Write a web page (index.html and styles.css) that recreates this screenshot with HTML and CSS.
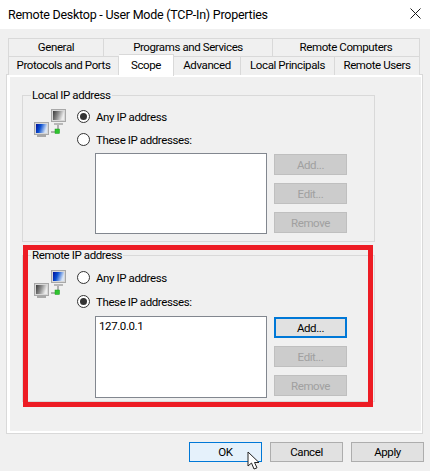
FILE: index.html
```html
<!DOCTYPE html>
<html lang="en">
<head>
<meta charset="utf-8">
<title>Remote Desktop - User Mode (TCP-In) Properties</title>
<link rel="stylesheet" href="styles.css">
</head>
<body>
<svg class="defs" width="0" height="0" aria-hidden="true">
  <defs>
    <linearGradient id="blue" x1="0" y1="0" x2="1" y2="0.3">
      <stop offset="0" stop-color="#00109a"/><stop offset="0.45" stop-color="#0a4fd0"/><stop offset="1" stop-color="#d8e4f4"/>
    </linearGradient>
    <linearGradient id="gray" x1="0" y1="0" x2="1" y2="0.3">
      <stop offset="0" stop-color="#3a3a3a"/><stop offset="0.5" stop-color="#8a8a8a"/><stop offset="1" stop-color="#ececec"/>
    </linearGradient>
  </defs>
</svg>
<header class="titlebar">
  <span class="title">Remote Desktop - User Mode (TCP-In) Properties</span>
  <svg class="close" width="11" height="11" viewBox="0 0 11 11"><path d="M0.5 0.5L10.5 10.5M10.5 0.5L0.5 10.5" stroke="#1a1a1a" stroke-width="1" fill="none"/></svg>
</header>
<div class="tabs">
  <div class="tab-row">
    <div class="tab w-general">General</div>
    <div class="tab w-programs">Programs and Services</div>
    <div class="tab w-computers">Remote Computers</div>
  </div>
  <div class="tab-row">
    <div class="tab w-protocols">Protocols and Ports</div>
    <div class="tab tab-active w-scope">Scope</div>
    <div class="tab w-advanced">Advanced</div>
    <div class="tab w-principals">Local Principals</div>
    <div class="tab w-users">Remote Users</div>
  </div>
</div>
<main class="panel">
  <fieldset class="group">
    <legend>Local IP address</legend>
    <div class="group-body">
      <svg class="net-icon" width="33" height="29" viewBox="0 0 33 29">
        <path d="M25 14V23H18" stroke="#9a9a9a" stroke-width="1.5" fill="none"/>
        <rect x="18.5" y="0.5" width="14" height="12" fill="#d8d8d8" stroke="#a8a8a8"/>
        <rect x="20" y="2" width="11" height="9" fill="url(#gray)"/>
        <rect x="21" y="14" width="9" height="2" fill="#b8b8b8"/>
        <rect x="1.5" y="13.5" width="14" height="12" fill="#d8d8d8" stroke="#a8a8a8"/>
        <rect x="3" y="15" width="11" height="9" fill="url(#blue)"/>
        <rect x="4" y="26" width="9" height="2" fill="#a8a8a8"/>
        <rect x="22" y="20" width="4.5" height="4.5" fill="#2fc42f" stroke="#1c9a1c" stroke-width="0.5"/>
      </svg>
      <div class="options">
        <label class="radio-row"><span class="radio radio-on"></span>Any IP address</label>
        <label class="radio-row"><span class="radio"></span>These IP addresses:</label>
        <div class="list-row">
          <div class="list"></div>
          <div class="side-buttons">
            <button class="btn btn-off" disabled>Add...</button>
            <button class="btn btn-off" disabled>Edit...</button>
            <button class="btn btn-off" disabled>Remove</button>
          </div>
        </div>
      </div>
    </div>
  </fieldset>
  <fieldset class="group group-remote">
    <legend>Remote IP address</legend>
    <div class="group-body">
      <svg class="net-icon" width="33" height="29" viewBox="0 0 33 29">
        <path d="M25 14V23H18" stroke="#9a9a9a" stroke-width="1.5" fill="none"/>
        <rect x="18.5" y="0.5" width="14" height="12" fill="#d8d8d8" stroke="#a8a8a8"/>
        <rect x="20" y="2" width="11" height="9" fill="url(#blue)"/>
        <rect x="21" y="14" width="9" height="2" fill="#b8b8b8"/>
        <rect x="1.5" y="13.5" width="14" height="12" fill="#d8d8d8" stroke="#a8a8a8"/>
        <rect x="3" y="15" width="11" height="9" fill="url(#gray)"/>
        <rect x="4" y="26" width="9" height="2" fill="#a8a8a8"/>
        <rect x="22" y="20" width="4.5" height="4.5" fill="#2fc42f" stroke="#1c9a1c" stroke-width="0.5"/>
      </svg>
      <div class="options">
        <label class="radio-row"><span class="radio"></span>Any IP address</label>
        <label class="radio-row"><span class="radio radio-on"></span>These IP addresses:</label>
        <div class="list-row">
          <div class="list">127.0.0.1</div>
          <div class="side-buttons">
            <button class="btn btn-focus">Add...</button>
            <button class="btn btn-off" disabled>Edit...</button>
            <button class="btn btn-off" disabled>Remove</button>
          </div>
        </div>
      </div>
    </div>
  </fieldset>
</main>
<footer class="actions">
  <button class="btn btn-hover">OK</button>
  <button class="btn">Cancel</button>
  <button class="btn">Apply</button>
</footer>
<div class="highlight"></div>
<svg class="cursor" width="15" height="20" viewBox="0 0 15 20"><path d="M1 1V15L4.5 12L7 18L10 16.8L7.5 11.5H12Z" fill="#fff" stroke="#222" stroke-width="1" stroke-linejoin="round"/></svg>
</body>
</html>
```
FILE: styles.css
```css
* { box-sizing: border-box; }
html, body { height: 100%; }
body {
  margin: 0;
  background: #f0f0f0;
  color: #000;
  font: 11.5px/16px Roboto, sans-serif;
  letter-spacing: -0.4px;
  overflow: hidden;
}
.defs { position: absolute; }
.titlebar {
  height: 29px;
  background: #fff;
  display: flex;
  align-items: center;
  justify-content: space-between;
  padding: 0 9px 0 8px;
}
.title { font-size: 12.5px; letter-spacing: -0.25px; }
.close { flex: none; margin-top: -2px; }
.tabs {
  margin: 9px 0 0 8px;
  width: 412px;
}
.tab-row { display: flex; height: 18px; }
.tab-row + .tab-row { height: 19px; }
.tab {
  border: 1px solid #d9d9d9;
  border-bottom: 0;
  background: #f0f0f0;
  text-align: center;
  line-height: 17px;
  white-space: nowrap;
}
.tab + .tab { border-left: 0; }
.tab-active {
  background: #fff;
  height: 22px;
  margin-top: -2px;
  position: relative;
  z-index: 1;
  line-height: 20px;
}
.w-general { width: 96px; }
.w-programs { width: 169px; }
.w-computers { width: 147px; }
.w-protocols { width: 111px; }
.w-scope { width: 55px; }
.w-advanced { width: 67px; }
.w-principals { width: 94px; }
.w-users { width: 85px; }
.panel {
  margin: -1px 0 0 6px;
  width: 417px;
  height: 360px;
  border: 1px solid #d9d9d9;
  box-shadow: inset 3px 0 0 #fff, inset 0 2px 0 #fff, inset 0 -2px 0 #fff, inset -1px 0 0 #fff;
  padding: 12px 0 0 15px;
}
.group {
  margin: 0;
  width: 353px;
  height: 155px;
  border: 1px solid #d9d9d9;
  padding: 7px 0 0 0;
}
.group-remote {
  margin-top: 5px;
  height: 155px;
  padding-top: 8px;
}
.group legend { margin-left: 8px; padding: 0 1px; line-height: 16px; }
.group-body { display: flex; padding-left: 10px; }
.net-icon { flex: none; margin-top: -1px; }
.options { margin-left: 11px; }
.radio-row {
  display: flex;
  align-items: center;
  gap: 6px;
  height: 13px;
  margin-bottom: 10px;
}
.group-remote .radio-row { margin-bottom: 11px; }
.radio {
  flex: none;
  width: 13px;
  height: 13px;
  border: 1px solid #333;
  border-radius: 50%;
  background: #fff;
  display: flex;
  align-items: center;
  justify-content: center;
}
.radio-on::after {
  content: "";
  width: 7px;
  height: 7px;
  border-radius: 50%;
  background: #333;
}
.list-row {
  display: flex;
  gap: 7px;
  margin-left: 18px;
  margin-top: -3px;
}
.list {
  width: 172px;
  height: 81px;
  background: #fff;
  border: 1px solid #82878f;
  padding: 1px 3px;
}
.group-remote .list { height: 82px; }
.side-buttons {
  display: flex;
  flex-direction: column;
  gap: 8px;
  margin-top: 1px;
}
.btn {
  width: 73px;
  height: 21px;
  margin: 0;
  padding: 0;
  border: 1px solid #adadad;
  background: #e1e1e1;
  color: #000;
  font: inherit;
  letter-spacing: inherit;
}
.btn-off {
  background: #ccc;
  border-color: #bfbfbf;
  color: #a0a0a0;
}
.btn-focus { border: 2px solid #0078d7; }
.btn-hover { background: #e5f1fb; border-color: #0078d7; }
.actions {
  display: flex;
  justify-content: flex-end;
  gap: 8px;
  margin: 8px 6px 0 0;
}
.actions .btn { height: 20px; }
.highlight {
  position: absolute;
  left: 23px;
  top: 245px;
  width: 350px;
  height: 162px;
  border: 5px solid #ed1c24;
}
.cursor {
  position: absolute;
  left: 247px;
  top: 451px;
}
```
